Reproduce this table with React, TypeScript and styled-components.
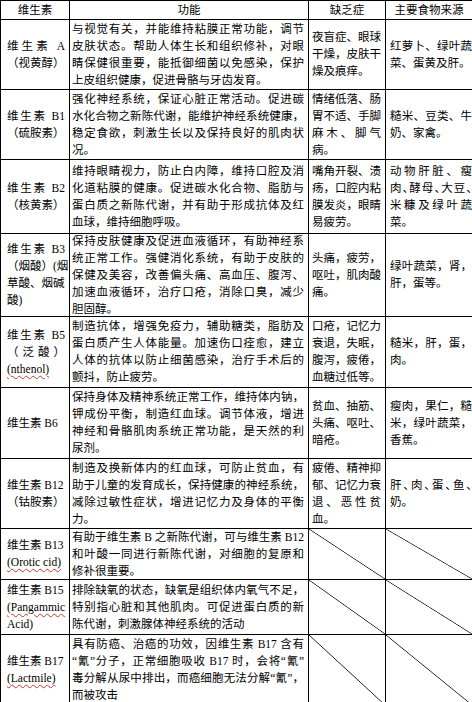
import React from 'react';
import styled, { createGlobalStyle, css } from 'styled-components';

type Row = {
  h: number;
  name: React.ReactNode[];
  spread?: number;
  func: string[];
  lack?: string[];
  food?: string[];
};

const GlobalStyle = createGlobalStyle`
  html, body {
    margin: 0;
    padding: 0;
    background: #fff;
    overflow: hidden;
  }
  body {
    width: 472px;
    height: 702px;
  }
`;

const Typo = styled.span`
  text-decoration: underline wavy #c0392b;
  text-decoration-thickness: 1px;
  text-underline-offset: 2px;
`;

// a leading "~" marks a line whose punctuation has to be squeezed to fit
const rows: Row[] = [
  {
    h: 69,
    name: ['维生素 A', '（视黄醇）'],
    spread: 1,
    func: [
      '与视觉有关，并能维持粘膜正常功能，调节',
      '皮肤状态。帮助人体生长和组织修补，对眼',
      '睛保健很重要，能抵御细菌以免感染，保护',
      '上皮组织健康，促进骨骼与牙齿发育。',
    ],
    lack: ['夜盲症、眼球', '干燥，皮肤干', '燥及痕痒。'],
    food: ['红萝卜、绿叶蔬', '菜、蛋黄及肝。'],
  },
  {
    h: 69,
    name: ['维生素 B1', '（硫胺素）'],
    spread: 1,
    func: [
      '强化神经系统，保证心脏正常活动。促进碳',
      '水化合物之新陈代谢，能维护神经系统健康，',
      '稳定食欲，刺激生长以及保持良好的肌肉状',
      '况。',
    ],
    lack: ['情绪低落、肠', '胃不适、手脚', '麻木、脚气', '病。'],
    food: ['糙米、豆类、牛', '奶、家禽。'],
  },
  {
    h: 73,
    name: ['维生素 B2', '（核黄素）'],
    spread: 1,
    func: [
      '维持眼睛视力，防止白内障，维持口腔及消',
      '化道粘膜的健康。促进碳水化合物、脂肪与',
      '蛋白质之新陈代谢，并有助于形成抗体及红',
      '血球，维持细胞呼吸。',
    ],
    lack: ['嘴角开裂、溃', '疡，口腔内粘', '膜发炎，眼睛', '易疲劳。'],
    food: ['动物肝脏、瘦', '~肉、酵母、大豆、', '米糠及绿叶蔬', '菜。'],
  },
  {
    h: 82,
    name: ['维生素 B3', '（烟酸）(烟', '草酸、烟碱', '酸)'],
    spread: 1,
    func: [
      '保持皮肤健康及促进血液循环，有助神经系',
      '统正常工作。强健消化系统，有助于皮肤的',
      '保健及美容，改善偏头痛、高血压、腹泻、',
      '加速血液循环，治疗口疮，消除口臭，减少',
      '胆固醇。',
    ],
    lack: ['头痛，疲劳，', '呕吐，肌肉酸', '痛。'],
    food: ['绿叶蔬菜，肾，', '肝，蛋等。'],
  },
  {
    h: 70,
    name: ['维生素 B5', '（泛酸）', <Typo>(nthenol)</Typo>],
    spread: 2,
    func: [
      '制造抗体，增强免疫力，辅助糖类，脂肪及',
      '蛋白质产生人体能量。加速伤口痊愈，建立',
      '人体的抗体以防止细菌感染，治疗手术后的',
      '颤抖，防止疲劳。',
    ],
    lack: ['口疮，记忆力', '衰退，失眠，', '腹泻，疲倦，', '血糖过低等。'],
    food: ['糙米，肝，蛋，', '肉。'],
  },
  {
    h: 70,
    name: ['维生素 B6'],
    func: [
      '保持身体及精神系统正常工作，维持体内钠，',
      '钾成份平衡，制造红血球。调节体液，增进',
      '神经和骨骼肌肉系统正常功能，是天然的利',
      '尿剂。',
    ],
    lack: ['贫血、抽筋、', '头痛、呕吐、', '暗疮。'],
    food: ['瘦肉，果仁，糙', '米，绿叶蔬菜，', '香蕉。'],
  },
  {
    h: 69,
    name: ['维生素 B12', '（钴胺素）'],
    func: [
      '制造及换新体内的红血球，可防止贫血，有',
      '助于儿童的发育成长，保持健康的神经系统，',
      '减除过敏性症状，增进记忆力及身体的平衡',
      '力。',
    ],
    lack: ['疲倦、精神抑', '郁、记忆力衰', '退、恶性贫', '血。'],
    food: ['~肝、肉、蛋、鱼、', '奶。'],
  },
  {
    h: 50,
    name: ['维生素 B13', <Typo>(Orotic cid)</Typo>],
    func: [
      '有助于维生素 B 之新陈代谢，可与维生素 B12',
      '和叶酸一同进行新陈代谢，对细胞的复原和',
      '修补很重要。',
    ],
  },
  {
    h: 54,
    name: ['维生素 B15', <Typo>(Pangammic</Typo>, 'Acid)'],
    func: [
      '排除缺氧的状态，缺氧是组织体内氧气不足，',
      '特别指心脏和其他肌肉。可促进蛋白质的新',
      '陈代谢，刺激腺体神经系统的活动',
    ],
  },
  {
    h: 70,
    name: ['维生素 B17', <Typo>(Lactmile)</Typo>],
    func: [
      '具有防癌、治癌的功效，因维生素 B17 含有',
      '“氰”分子，正常细胞吸收 B17 时，会将“氰”',
      '毒分解从尿中排出，而癌细胞无法分解“氰”，',
      '而被攻击',
    ],
  },
];

const heads = ['维生素', '功能', '缺乏症', '主要食物来源'];

const pads = {
  name: '0 4px 0 6px',
  func: '0 4px 0 2px',
  lack: '0 4px 0 3px',
  food: '0 0 0 4px',
};

export default function App() {
  const template = ['18px', ...rows.map((r) => `${r.h}px`)].join(' ');

  const renderLines = (lines: string[]) =>
    lines.map((line, i) => {
      const tight = line.startsWith('~');
      return (
        <Line key={i} $spread={i < lines.length - 1} $tight={tight}>
          {tight ? line.slice(1) : line}
        </Line>
      );
    });

  return (
    <>
      <GlobalStyle />
      <Table $rows={template}>
        {heads.map((h) => (
          <HeadCell key={h}>{h}</HeadCell>
        ))}
        {rows.map((row, ri) => (
          <React.Fragment key={ri}>
            <Cell $pad={pads.name}>
              {row.name.map((n, i) => (
                <Line key={i} $spread={i < (row.spread ?? 0)}>
                  {n}
                </Line>
              ))}
            </Cell>
            <Cell $pad={pads.func}>{renderLines(row.func)}</Cell>
            {row.lack ? (
              <Cell $pad={pads.lack}>{renderLines(row.lack)}</Cell>
            ) : (
              <Cell $pad="0" $slash />
            )}
            {row.food ? (
              <Cell $pad={pads.food}>{renderLines(row.food)}</Cell>
            ) : (
              <Cell $pad="0" $slash />
            )}
          </React.Fragment>
        ))}
      </Table>
    </>
  );
}

const Table = styled.div<{ $rows: string }>`
  display: grid;
  grid-template-columns: 68px 238px 76px 86px;
  grid-template-rows: ${(p) => p.$rows};
  gap: 1px;
  padding: 1px;
  width: max-content;
  background: #000;
  font-family: 'Liberation Serif', 'Noto Sans CJK SC', serif;
  font-size: 11.5px;
  line-height: 17px;
  color: #000;
`;

const HeadCell = styled.div`
  background: #fff;
  display: flex;
  align-items: center;
  justify-content: center;
  line-height: 18px;
`;

const Cell = styled.div<{ $pad: string; $slash?: boolean }>`
  background: #fff;
  padding: ${(p) => p.$pad};
  display: flex;
  flex-direction: column;
  justify-content: center;
  min-width: 0;
  ${(p) =>
    p.$slash &&
    css`
      background: linear-gradient(
        to top right,
        #fff calc(50% - 0.7px),
        #1a1a1a 50%,
        #fff calc(50% + 0.7px)
      );
    `}
`;

const Line = styled.div<{ $spread?: boolean; $tight?: boolean }>`
  white-space: nowrap;
  text-align: ${(p) => (p.$spread ? 'justify' : 'left')};
  text-align-last: ${(p) => (p.$spread ? 'justify' : 'left')};
  ${(p) =>
    p.$tight &&
    css`
      font-feature-settings: 'halt';
    `}
`;
